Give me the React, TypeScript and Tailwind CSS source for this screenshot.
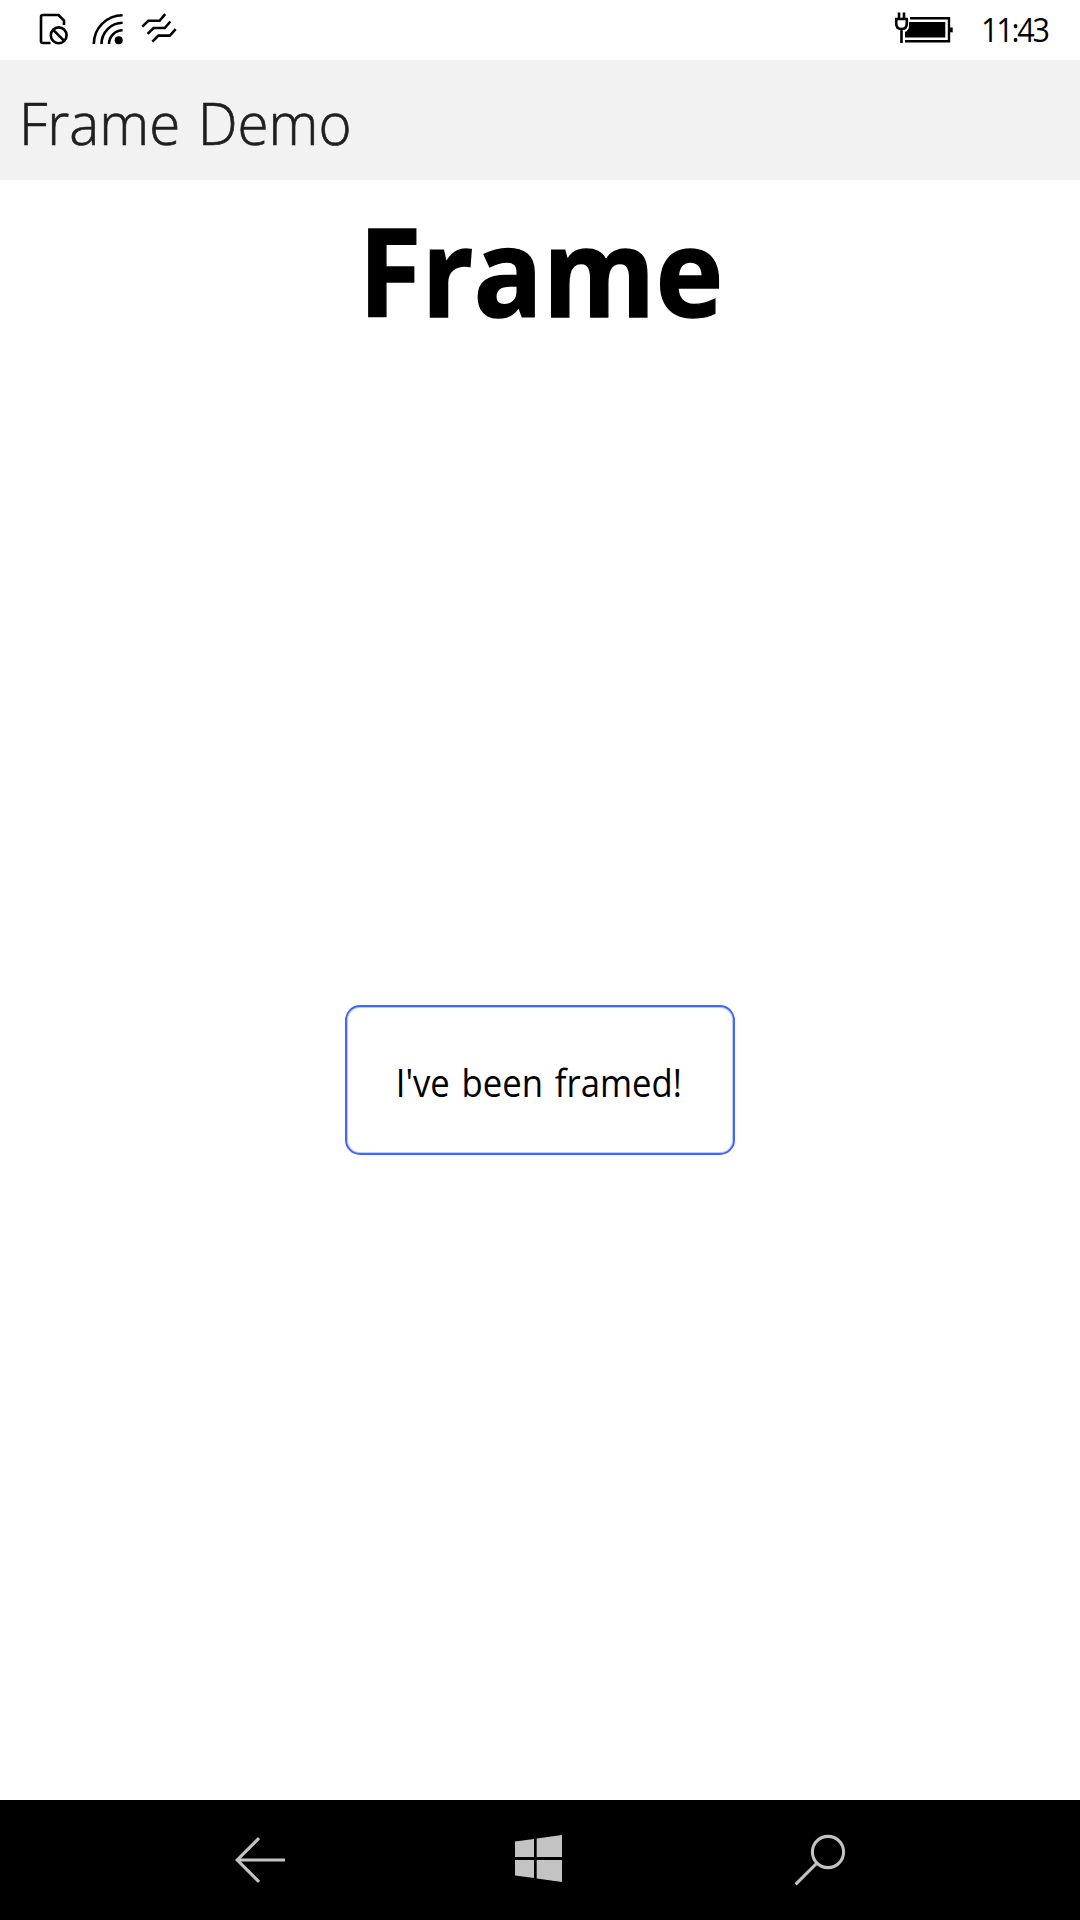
function StatusBar() {
  return (
    <header className="flex h-[60px] shrink-0 items-start justify-between bg-white text-black">
      <svg width="190" height="60" viewBox="0 0 190 60" fill="none" stroke="black" strokeWidth="2.6">
        <path d="M50.5 43H43Q41 43 41 41V17Q41 15 43 15H58.5L64 20.5V25" />
        <circle cx="58.7" cy="35.3" r="7.9" />
        <path d="M53.2 29.8L64.2 40.8" />
        <path d="M93.8 44A28.8 28.8 0 0 1 122.6 15.2M101.5 44A21.2 21.2 0 0 1 122.6 22.8M109 44A13.8 13.8 0 0 1 122.6 30.2" />
        <circle cx="118.7" cy="40.3" r="4" fill="black" stroke="none" />
        <path d="M142.3 26.6L148.3 20.8H159.6L165.2 14.2M147.6 33.9L153.6 28H164.8L170.4 21.5M152.4 41.6L158.4 35.6H169.8L175.7 29.2" />
      </svg>
      <div className="flex">
        <svg width="80" height="60" viewBox="890 0 80 60" fill="none" stroke="black" strokeWidth="2.4">
          <path d="M910 18.2H949V41.3H905" />
          <path d="M950 27.5H952.7V32.3H950Z" fill="black" stroke="none" />
          <path d="M909 22H945.3V37.5H905V32Q909 30 909 26Z" fill="black" stroke="none" />
          <path d="M899 12.5V18M904 12.5V18M895 19H908M896.2 19V23.5Q896.2 29 901.5 29Q906.8 29 906.8 23.5V19M901.5 29V43" strokeWidth="2.6" />
        </svg>
        <time className="w-[110px] pl-[11px] pt-[5px]">
          <span className="inline-block origin-left scale-x-[0.91] whitespace-nowrap text-[33.5px] leading-[48px] tracking-[-2.4px]">11:43</span>
        </time>
      </div>
    </header>
  );
}

function NavigationBar() {
  return (
    <nav className="flex h-[120px] shrink-0 items-center justify-center gap-[200px] bg-black">
      <button aria-label="Back">
        <svg width="80" height="80" viewBox="220 1820 80 80" fill="none" stroke="#c3c3c3" strokeWidth="3.1">
          <path d="M259 1838.2L237.2 1860L259 1881.8M237.2 1860H285" />
        </svg>
      </button>
      <button aria-label="Start">
        <svg width="80" height="80" viewBox="500 1820 80 80" fill="#c3c3c3">
          <path d="M515 1841.5L534 1839V1857H515ZM536.7 1838.4L562 1835V1857H536.7ZM515 1860H534V1878L515 1875.5ZM536.7 1860H562V1882L536.7 1878.5Z" />
        </svg>
      </button>
      <button aria-label="Search">
        <svg width="80" height="80" viewBox="780 1820 80 80" fill="none" stroke="#c3c3c3" strokeWidth="3.1">
          <circle cx="828" cy="1852" r="15.6" />
          <path d="M817 1863L795.6 1884.4" />
        </svg>
      </button>
    </nav>
  );
}

export default function App() {
  return (
    <div className="flex h-[1920px] w-[1080px] flex-col overflow-hidden bg-white font-['Open_Sans',sans-serif] text-black">
      <StatusBar />
      <div className="flex h-[120px] shrink-0 items-center bg-[#f2f2f2] pl-[19px] pt-[4px]">
        <h1 className="origin-left scale-x-[0.957] whitespace-nowrap text-[59px] font-light leading-[80px] text-[#1f1f1f] [-webkit-text-stroke:0.7px_#1f1f1f] [word-spacing:3px]">Frame Demo</h1>
      </div>
      <main className="flex flex-1 flex-col items-center">
        <h2 className="h-[180px] scale-x-[0.94] whitespace-nowrap pl-[2px] text-[122px] font-bold leading-[180px] [-webkit-text-stroke:1.5px_black]">Frame</h2>
        <section className="mt-[645px] flex h-[150px] w-[390px] items-center justify-center rounded-[15px] border-2 border-[#3f66ff] pt-[5px] shadow-[inset_0_0_0_1px_#3f66ff55]">
          <p className="scale-x-[0.925] whitespace-nowrap pr-[3px] text-[37.5px] leading-[50px] [word-spacing:3px]">I've been framed!</p>
        </section>
      </main>
      <NavigationBar />
    </div>
  );
}
